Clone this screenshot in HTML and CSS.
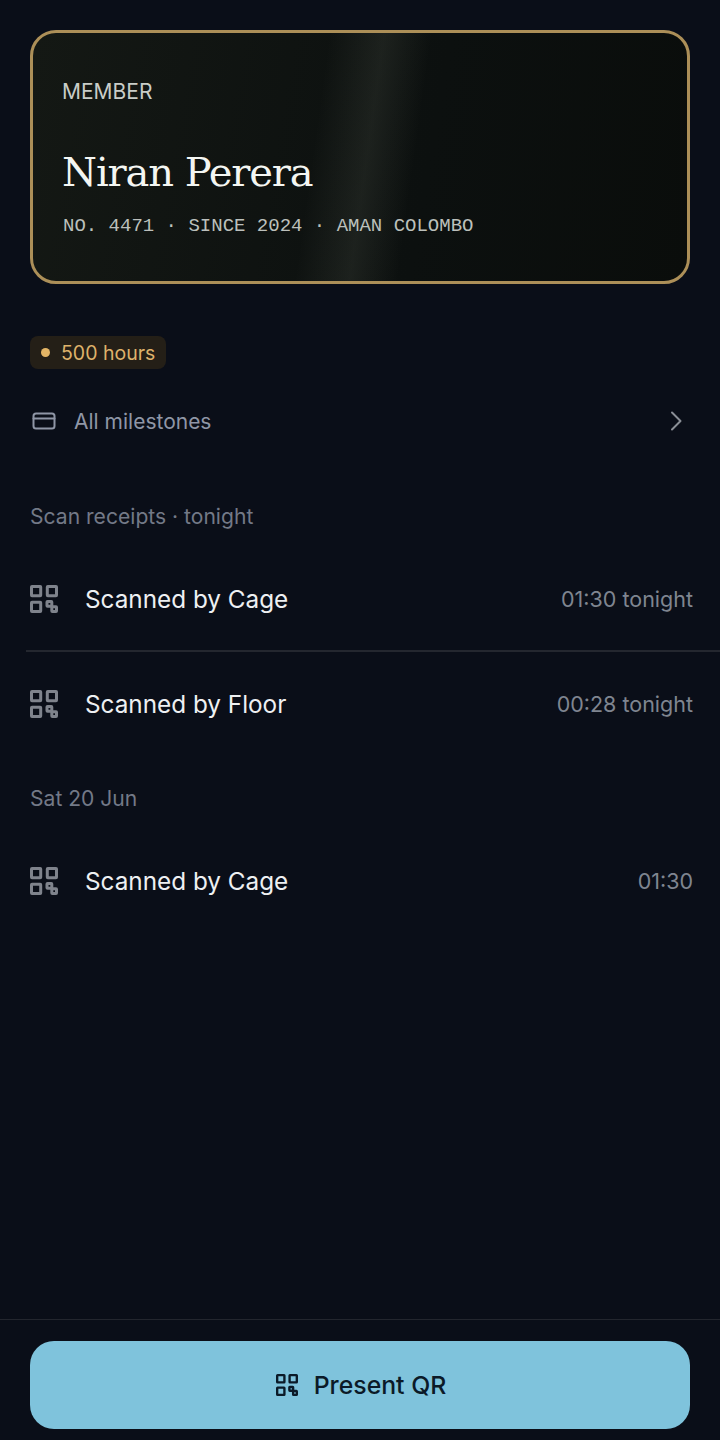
FILE: index.html
```html
<!DOCTYPE html>
<html lang="en">

<head>
    <title>Member</title>
    <meta name="viewport" content="initial-scale=1, width=device-width">
    <link rel="stylesheet" href="styles.css">
</head>

<body>
    <main class="content">
        <section class="card">
            <div class="card-label">MEMBER</div>
            <div class="card-name">Niran Perera</div>
            <div class="card-meta">NO. 4471 · SINCE 2024 · AMAN COLOMBO</div>
        </section>

        <div class="badge"><span class="dot"></span>500 hours</div>

        <div class="link-row">
            <svg class="link-icon" viewBox="0 0 24 24" fill="none" stroke="currentColor" stroke-width="2" stroke-linecap="round" stroke-linejoin="round">
                <rect x="1.5" y="4.5" width="21" height="15" rx="2.5"></rect>
                <path d="M1.5 9.5h21"></path>
            </svg>
            <span class="link-text">All milestones</span>
            <svg class="chevron" viewBox="0 0 24 24" fill="none" stroke="currentColor" stroke-width="2" stroke-linecap="round" stroke-linejoin="round">
                <path d="M8 3.5l8.5 8.5-8.5 8.5"></path>
            </svg>
        </div>

        <h2 class="section-title first">Scan receipts · tonight</h2>
        <div class="list">
            <div class="row divided">
                <svg class="qr" viewBox="0 0 28 28"><use href="#qr"></use></svg>
                <span class="row-text">Scanned by Cage</span>
                <span class="row-time">01:30 tonight</span>
            </div>
            <div class="row">
                <svg class="qr" viewBox="0 0 28 28"><use href="#qr"></use></svg>
                <span class="row-text">Scanned by Floor</span>
                <span class="row-time">00:28 tonight</span>
            </div>
        </div>

        <h2 class="section-title">Sat 20 Jun</h2>
        <div class="list">
            <div class="row">
                <svg class="qr" viewBox="0 0 28 28"><use href="#qr"></use></svg>
                <span class="row-text">Scanned by Cage</span>
                <span class="row-time">01:30</span>
            </div>
        </div>
    </main>

    <footer class="footer">
        <button class="present">
            <svg class="qr-small" viewBox="0 0 28 28"><use href="#qr"></use></svg>
            Present QR
        </button>
    </footer>

    <svg class="defs" width="0" height="0">
        <symbol id="qr" viewBox="0 0 28 28">
            <g fill="none" stroke="currentColor" stroke-width="3" stroke-linejoin="round">
                <rect x="1.5" y="1.5" width="9.2" height="9.2" rx="0.5"></rect>
                <rect x="17.3" y="1.5" width="9.2" height="9.2" rx="0.5"></rect>
                <rect x="1.5" y="17.3" width="9.2" height="9.2" rx="0.5"></rect>
                <rect x="17" y="16.5" width="4.8" height="4.8" rx="0.5"></rect>
                <rect x="21.8" y="21.7" width="4.7" height="4.8" rx="0.5"></rect>
            </g>
        </symbol>
    </svg>
</body>
</html>
```

FILE: styles.css
```css
* {
    box-sizing: border-box;
}

html,
body {
    margin: 0;
    height: 100%;
}

body {
    display: flex;
    flex-flow: column;
    background-color: #0a0e18;
    color: #eef0f2;
    font-family: Inter, "Noto Sans", sans-serif;
}

.defs {
    position: absolute;
}

.content {
    flex: 1;
    padding: 30px 30px 0;
}

.card {
    height: 254px;
    padding: 47px 29px 0;
    border: 3px solid #ac8f58;
    border-radius: 26px;
    background:
        linear-gradient(98deg, transparent 43%, rgba(215, 225, 195, 0.08) 51%, transparent 58%),
        linear-gradient(100deg, #141814 0%, #0c100f 60%, #0a0d0b 100%);
}

.card-label {
    color: #c9cdc8;
    font-size: 21px;
    line-height: 24px;
}

.card-name {
    margin-top: 42px;
    color: #f4f6f2;
    font-family: "DejaVu Serif", serif;
    font-size: 40px;
    letter-spacing: -1.1px;
    line-height: 52px;
}

.card-meta {
    margin-top: 16px;
    margin-left: 1px;
    color: #bcc0bc;
    font-family: "Liberation Mono", monospace;
    font-size: 19px;
    line-height: 24px;
}

.badge {
    display: inline-flex;
    align-items: center;
    gap: 11px;
    height: 33px;
    margin-top: 52px;
    padding: 0 11px;
    border-radius: 8px;
    background-color: #241f17;
    color: #deb26b;
    font-size: 19.5px;
}

.dot {
    width: 9px;
    height: 9px;
    border-radius: 50%;
    background-color: #e3b566;
}

.link-row {
    display: flex;
    align-items: center;
    height: 40px;
    margin-top: 32px;
    color: #8f96a6;
    font-size: 21px;
}

.link-icon {
    width: 24px;
    height: 24px;
    margin-left: 2px;
}

.link-text {
    flex: 1;
    margin-left: 18px;
}

.chevron {
    width: 24px;
    height: 24px;
    margin-right: 2px;
    color: #8a8e96;
}

.section-title {
    margin: 29px 0 16px;
    color: #737987;
    font-size: 21.1px;
    font-weight: 400;
    line-height: 28px;
}

.section-title.first {
    margin-top: 62px;
}

.list {
    margin: 0 -30px 0 -4px;
}

.row {
    display: flex;
    align-items: center;
    height: 104px;
    padding: 0 27px 0 4px;
}

.row.divided {
    height: 105px;
    padding-top: 1px;
    border-bottom: 2px solid #24272f;
}

.qr {
    width: 28px;
    height: 28px;
    color: #7f838c;
}

.row-text {
    flex: 1;
    margin-left: 27px;
    font-size: 24.3px;
}

.row-time {
    color: #7f8590;
    font-size: 21.5px;
}

.footer {
    height: 121px;
    padding: 21px 30px 0;
    border-top: 1px solid #23262e;
}

.present {
    display: flex;
    align-items: center;
    justify-content: center;
    gap: 16px;
    width: 100%;
    height: 88px;
    padding-left: 8px;
    border: 0;
    border-radius: 24px;
    background-color: #7fc3dc;
    color: #0b1a28;
    font-family: inherit;
    font-size: 24.8px;
    font-weight: 500;
}

.qr-small {
    width: 22px;
    height: 22px;
}
```
